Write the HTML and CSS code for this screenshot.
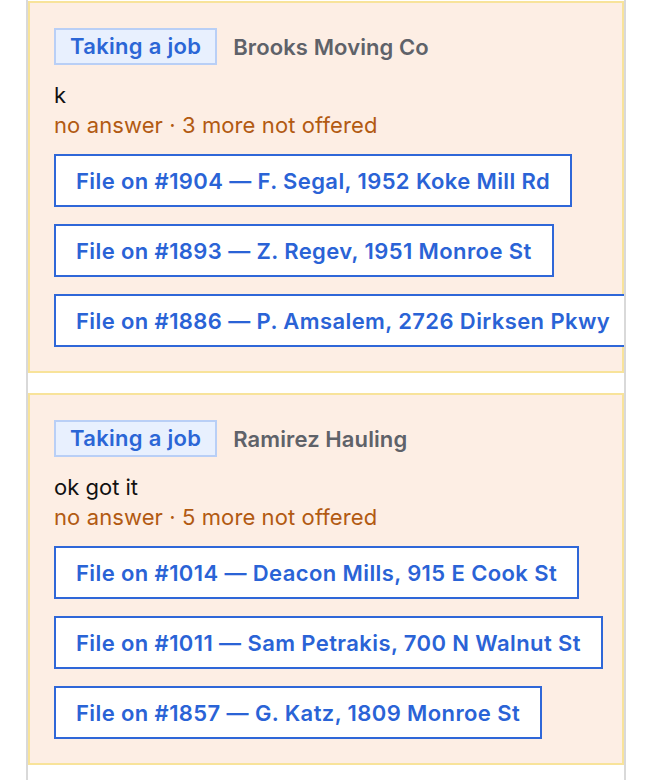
FILE: index.html
```html
<!DOCTYPE html>
<html>
<head>
<meta charset="utf-8">
<link rel="stylesheet" href="styles.css">
</head>
<body>
<div class="feed">
  <div class="card first">
    <div class="head">
      <span class="tag">Taking a job</span>
      <span class="who">Brooks Moving Co</span>
    </div>
    <div class="msg">k</div>
    <div class="meta">no answer · 3 more not offered</div>
    <div class="actions">
      <button class="file">File on #1904 — F. Segal, 1952 Koke Mill Rd</button>
      <button class="file">File on #1893 — Z. Regev, 1951 Monroe St</button>
      <button class="file">File on #1886 — P. Amsalem, 2726 Dirksen Pkwy</button>
    </div>
  </div>
  <div class="card">
    <div class="head">
      <span class="tag">Taking a job</span>
      <span class="who">Ramirez Hauling</span>
    </div>
    <div class="msg">ok got it</div>
    <div class="meta">no answer · 5 more not offered</div>
    <div class="actions">
      <button class="file">File on #1014 — Deacon Mills, 915 E Cook St</button>
      <button class="file">File on #1011 — Sam Petrakis, 700 N Walnut St</button>
      <button class="file">File on #1857 — G. Katz, 1809 Monroe St</button>
    </div>
  </div>
</div>
</body>
</html>
```

FILE: styles.css
```css
html, body {
  margin: 0;
  padding: 0;
  background: #ffffff;
}
body {
  font-family: Inter, "Liberation Sans", sans-serif;
  font-size: 22px;
}
.feed {
  margin-left: 26px;
  width: 596px;
  min-height: 780px;
  border-left: 2px solid #d9d9d9;
  border-right: 2px solid #d9d9d9;
  overflow: hidden;
  display: flex;
  flex-direction: column;
  gap: 20px;
}
.card {
  background: #fdeee4;
  border: 2px solid #f8e39a;
  padding: 25px 24px 24px 24px;
  display: flex;
  flex-direction: column;
}
.card.first {
  margin-top: 1px;
}
.head {
  display: flex;
  align-items: center;
  gap: 16px;
}
.tag {
  display: inline-block;
  box-sizing: border-box;
  height: 37px;
  line-height: 33px;
  padding: 0 14px;
  background: #e8f0fe;
  border: 2px solid #b9cff6;
  color: #2b66d6;
  font-weight: 600;
  letter-spacing: 0.3px;
}
.who {
  color: #5f6269;
  font-weight: 600;
  letter-spacing: 0.1px;
}
.msg {
  margin-top: 15px;
  line-height: 30px;
  color: #111111;
}
.meta {
  line-height: 30px;
  color: #b25a12;
  letter-spacing: 0.1px;
}
.actions {
  margin-top: 14px;
  display: flex;
  flex-direction: column;
  align-items: flex-start;
  gap: 17px;
}
.file {
  flex: none;
  box-sizing: border-box;
  height: 53px;
  padding: 0 20px;
  background: #ffffff;
  border: 2px solid #2f67d8;
  border-radius: 0;
  color: #2a63d6;
  font-family: Inter, "Liberation Sans", sans-serif;
  font-size: 22px;
  font-weight: 600;
  letter-spacing: 0.4px;
  white-space: nowrap;
  cursor: pointer;
}
```
